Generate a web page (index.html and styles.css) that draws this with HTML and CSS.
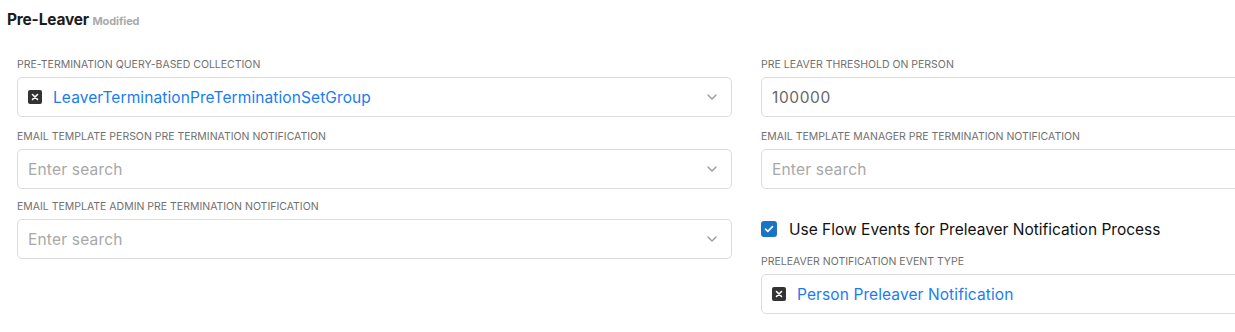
FILE: index.html
```html
<!DOCTYPE html>
<html>
<head>
<meta charset="utf-8">
<link rel="stylesheet" href="styles.css">
</head>
<body>
<div class="page">
  <h2 class="title">Pre-Leaver <span class="modified">Modified</span></h2>
  <div class="grid">
    <div class="col">
      <div class="field">
        <div class="label">Pre-Termination Query-Based Collection</div>
        <div class="box">
          <span class="tag-x"><svg width="8" height="8" viewBox="0 0 8 8"><path d="M1.5 1.5L6.5 6.5M6.5 1.5L1.5 6.5" stroke="#fff" stroke-width="1.6" stroke-linecap="round"/></svg></span>
          <span class="value link">LeaverTerminationPreTerminationSetGroup</span>
          <svg class="chev" width="10" height="6" viewBox="0 0 10 6"><path d="M1 1l4 4 4-4" fill="none" stroke="#9a9a9a" stroke-width="1.4" stroke-linecap="round" stroke-linejoin="round"/></svg>
        </div>
      </div>
      <div class="field">
        <div class="label">Email Template Person Pre Termination Notification</div>
        <div class="box">
          <span class="value ph">Enter search</span>
          <svg class="chev" width="10" height="6" viewBox="0 0 10 6"><path d="M1 1l4 4 4-4" fill="none" stroke="#9a9a9a" stroke-width="1.4" stroke-linecap="round" stroke-linejoin="round"/></svg>
        </div>
      </div>
      <div class="field">
        <div class="label">Email Template Admin Pre Termination Notification</div>
        <div class="box">
          <span class="value ph">Enter search</span>
          <svg class="chev" width="10" height="6" viewBox="0 0 10 6"><path d="M1 1l4 4 4-4" fill="none" stroke="#9a9a9a" stroke-width="1.4" stroke-linecap="round" stroke-linejoin="round"/></svg>
        </div>
      </div>
    </div>
    <div class="col">
      <div class="field">
        <div class="label">Pre Leaver Threshold On Person</div>
        <div class="box">
          <span class="value num">100000</span>
        </div>
      </div>
      <div class="field">
        <div class="label">Email Template Manager Pre Termination Notification</div>
        <div class="box">
          <span class="value ph">Enter search</span>
        </div>
      </div>
      <div class="check-row">
        <span class="checkbox"><svg width="10" height="8" viewBox="0 0 10 8"><path d="M1.5 4.2L3.8 6.3 8.5 1.7" fill="none" stroke="#fff" stroke-width="1.7" stroke-linecap="round" stroke-linejoin="round"/></svg></span>
        <span class="check-text">Use Flow Events for Preleaver Notification Process</span>
      </div>
      <div class="field">
        <div class="label">Preleaver Notification Event Type</div>
        <div class="box">
          <span class="tag-x"><svg width="8" height="8" viewBox="0 0 8 8"><path d="M1.5 1.5L6.5 6.5M6.5 1.5L1.5 6.5" stroke="#fff" stroke-width="1.6" stroke-linecap="round"/></svg></span>
          <span class="value link">Person Preleaver Notification</span>
        </div>
      </div>
    </div>
  </div>
</div>
</body>
</html>
```
FILE: styles.css
```css
html, body {
  margin: 0;
  padding: 0;
  background: #fff;
  overflow: hidden;
}
body {
  font-family: "Inter", "Open Sans", sans-serif;
  color: #222;
  width: 1235px;
  height: 332px;
}
.page {
  padding: 9px 0 0 7px;
}
.title {
  margin: 0;
  font-size: 15.5px;
  font-weight: 700;
  line-height: 22px;
  height: 22px;
  color: #1c1c1c;
  letter-spacing: -0.2px;
}
.modified {
  font-size: 11px;
  font-weight: 700;
  color: #aaa;
  letter-spacing: -0.1px;
}
.grid {
  display: grid;
  grid-template-columns: 715px 715px;
  column-gap: 29px;
  padding: 27px 0 0 10px;
}
.col {
  display: flex;
  flex-direction: column;
}
.field {
  display: flex;
  flex-direction: column;
  margin-bottom: 11px;
}
.field:first-child {
  margin-bottom: 13px;
}
.label {
  font-size: 10.5px;
  line-height: 14px;
  text-transform: uppercase;
  color: #707070;
  margin-bottom: 5px;
  white-space: nowrap;
}
.box {
  height: 40px;
  box-sizing: border-box;
  border: 1px solid #dcdcdc;
  border-radius: 5px;
  display: flex;
  align-items: center;
  padding: 0 14px 0 10px;
}
.value {
  font-size: 15.5px;
  flex: 1;
  letter-spacing: 0.1px;
  white-space: nowrap;
}
.link { color: #1a7cf0; }
.ph { color: #a8a8a8; letter-spacing: 0.2px; }
.num { color: #666; letter-spacing: 0.6px; }
.tag-x {
  width: 14px;
  height: 14px;
  border-radius: 2px;
  background: #333;
  display: flex;
  align-items: center;
  justify-content: center;
  margin-right: 11px;
  flex: none;
}
.chev { flex: none; }
.check-row {
  display: flex;
  align-items: center;
  height: 16px;
  margin: 21px 0 18px;
}
.checkbox {
  width: 16px;
  height: 16px;
  box-sizing: border-box;
  border-radius: 3px;
  background: #1a73c4;
  display: flex;
  align-items: center;
  justify-content: center;
  margin-right: 12px;
}
.check-text {
  font-size: 15.5px;
  color: #111;
}
```
